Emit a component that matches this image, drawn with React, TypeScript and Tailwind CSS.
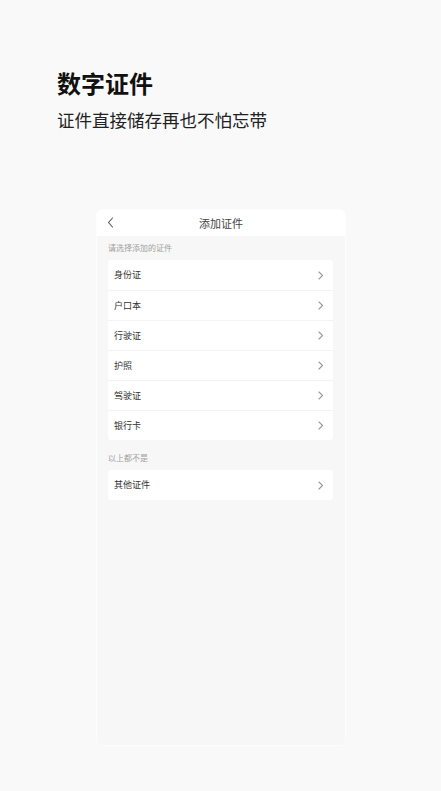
import React from "react";

const font = { fontFamily: '"Noto Sans CJK SC", "Noto Sans", sans-serif' };

function Chevron() {
  return (
    <svg width="6" height="9" viewBox="0 0 6 9" fill="none">
      <path d="M1 1l3.5 3.5L1 8" stroke="#9a9a9a" strokeWidth="1.1" strokeLinecap="round" strokeLinejoin="round" />
    </svg>
  );
}

function Row({ label, first }: { label: string; first?: boolean }) {
  return (
    <div className={`flex h-[30px] items-center justify-between pl-[6px] pr-[9px] ${first ? "" : "border-t border-[#f3f3f3]"}`}>
      <span className="text-[9px] text-[#333]">{label}</span>
      <Chevron />
    </div>
  );
}

export default function App() {
  const items = ["身份证", "户口本", "行驶证", "护照", "驾驶证", "银行卡"];
  return (
    <div className="flex h-[791px] w-full flex-col bg-[#f9f9f9]" style={font}>
      <div className="ml-[57px] mt-[67px] text-[24px] font-bold leading-[32px] text-[#111]">数字证件</div>
      <div className="ml-[57px] mt-[9px] text-[17.5px] leading-[24px] text-[#222]">证件直接储存再也不怕忘带</div>
      <div className="ml-[96px] mt-[77px] flex h-[537px] w-[250px] flex-col overflow-hidden rounded-[6px] border border-[#fdfdfd] bg-[#f7f7f7]">
        <div className="relative flex h-[26px] items-center justify-center bg-white">
          <svg className="absolute left-[10px] top-[7px]" width="7" height="11" viewBox="0 0 7 11" fill="none">
            <path d="M5.5 1L1.5 5.5l4 4.5" stroke="#555" strokeWidth="1.1" strokeLinecap="round" strokeLinejoin="round" />
          </svg>
          <span className="text-[11px] text-[#444]">添加证件</span>
        </div>
        <div className="ml-[11px] mr-[12px] flex flex-col">
          <div className="flex h-[24px] items-center text-[8px] text-[#a0a0a0]">请选择添加的证件</div>
          <div className="flex flex-col rounded-[3px] bg-white">
            {items.map((t, i) => (
              <Row key={t} label={t} first={i === 0} />
            ))}
          </div>
          <div className="mt-[6px] flex h-[24px] items-center text-[8px] text-[#a0a0a0]">以上都不是</div>
          <div className="flex flex-col rounded-[3px] bg-white">
            <Row label="其他证件" first />
          </div>
        </div>
      </div>
    </div>
  );
}
